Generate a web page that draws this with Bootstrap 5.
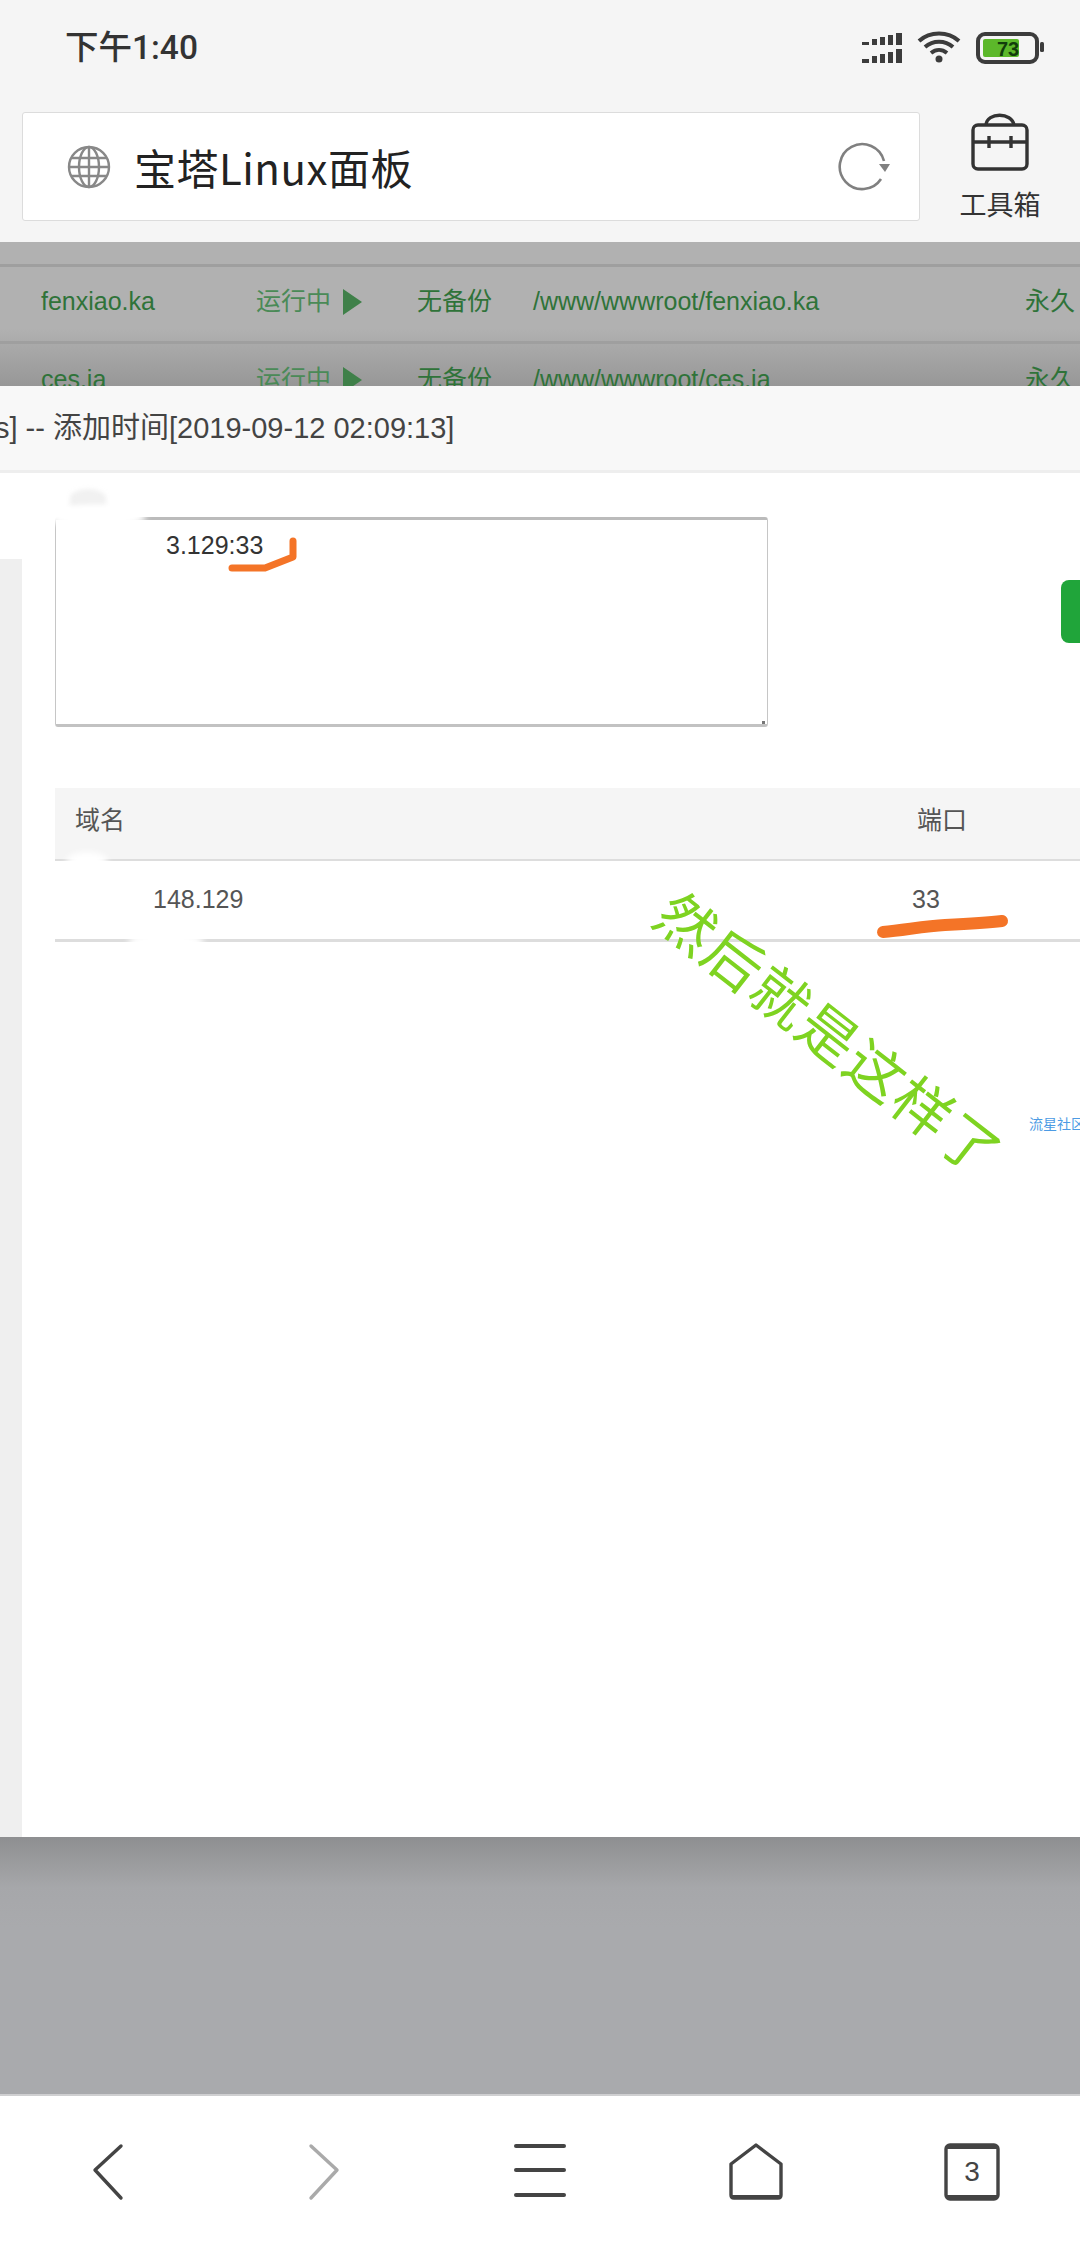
<!DOCTYPE html>
<html lang="zh-CN">
<head>
  <meta charset="UTF-8" />
  <meta name="viewport" content="width=device-width, initial-scale=1.0" />
  <title>宝塔Linux面板</title>
  <link href="https://cdn.jsdelivr.net/npm/bootstrap@5.3.3/dist/css/bootstrap.min.css" rel="stylesheet" />
  <style>
    body {
      width: 1080px;
      height: 2248px;
      overflow: hidden;
      background: #fff;
      font-family: "Liberation Sans", "Noto Sans CJK SC", sans-serif;
    }
    .shell { width: 1080px; height: 2248px; overflow: hidden; position: relative; }

    /* browser chrome */
    .top-chrome { height: 242px; background: #f5f5f5; }
    .status-row { height: 96px; padding: 0 36px 0 65px; }
    .clock { font-family: Roboto, "Noto Sans CJK SC", sans-serif; font-size: 33.500px; font-weight: 500; color: #333; }
    .addr-row { padding: 16px 0 0 22px; }
    .addr-box {
      width: 898px; height: 109px; background: #fff;
      border: 1px solid #dcdcdc; border-radius: 3px;
      padding: 0 28px 0 44px;
    }
    .addr-title { font-family: "Noto Sans CJK SC", sans-serif; font-size: 42px; color: #222; margin-left: 23px; letter-spacing: .5px; }
    .tool-col { width: 160px; margin-top: 0; }
    .tool-label { font-family: "Noto Sans CJK SC", sans-serif; font-size: 27px; line-height: 34px; color: #333; margin-top: 15px; }

    /* dimmed list behind the dialog */
    .dim-list { height: 144px; overflow: hidden; background: linear-gradient(#b1b1b1 60%, #979797 100%); }
    .dim-list table { table-layout: fixed; width: 1080px; margin: 22px 0 0; }
    .dim-list td {
      height: 77px; padding: 0 0 5px; background: transparent; vertical-align: middle;
      border-top: 3px solid #9f9f9f; border-bottom: 0;
      font-size: 25px; color: #2f7339; white-space: nowrap;
    }
    .dim-list td:first-child { padding-left: 41px; }
    .run-cell { color: #4a8a57 !important; }
    .run-arrow { font-size: 0; display: inline-block; margin-left: 12px; border-left: 19px solid #3f8049; border-top: 13px solid transparent; border-bottom: 13px solid transparent; vertical-align: -5px; }

    /* dialog */
    .dlg-head {
      height: 87px; background: #f8f8f8; border-bottom: 3px solid #eee;
      font-size: 29px; line-height: 84px; color: #444; white-space: nowrap; text-indent: -5px;
    }
    .dlg-main { height: 1364px; background: #fff; }
    .side-strip { width: 22px; flex: none; }
    .side-fill { margin-top: 86px; height: 1278px; background: #efefef; }
    .dlg-content { flex: 1; min-width: 0; padding: 44px 0 0 33px; overflow: hidden; }
    .addr-input {
      width: 713px; height: 210px; flex: none; padding: 10px 0 0 110px; resize: none;
      border: 1px solid #c6c6c6; border-top: 3px solid #bbb; border-bottom: 3px solid #c2c2c2;
      border-radius: 3px; font-size: 25px; line-height: 30px; color: #333;
      font-family: "Liberation Sans", sans-serif;
    }
    .add-btn {
      width: 60px; height: 63px; margin: 63px 0 0 293px; flex: none;
      border: 0; border-radius: 8px 0 0 8px; background: #20a53a;
    }
    .domain-table { width: 1025px; margin: 61px 0 0; table-layout: fixed; font-size: 25px; color: #555; }
    .domain-table th, .domain-table td { padding: 0; vertical-align: middle; font-weight: 400; color: #555; }
    .domain-table th { height: 72px; background: #f5f5f5; border-bottom: 2px solid #ddd; padding-bottom: 5px; }
    .domain-table td { height: 80px; background: #fff; border-bottom: 3px solid #ddd; }
    .cell-a { width: 857px; padding-left: 20px !important; }
    .cell-port { padding-left: 5px !important; }
    .domain-table td.cell-port { padding-left: 0 !important; }
    .ip-cell { padding-left: 98px !important; }

    /* overlays drawn on top of the screenshot */
    .ink-layer { position: absolute; left: 0; top: 0; pointer-events: none; }
    .smear { position: absolute; background: #fff; border-radius: 50%; filter: blur(3px); }
    .smear-a { left: 48px; top: 505px; width: 98px; height: 24px; }
    .smear-b { left: 66px; top: 852px; width: 42px; height: 18px; }
    .smear-c { left: 128px; top: 932px; width: 76px; height: 20px; }
    .ghost { position: absolute; left: 70px; top: 489px; width: 36px; height: 18px; background: #f1f1f1; border-radius: 50% 50% 0 0; filter: blur(2px); }
    .grip-dot { position: absolute; left: 762px; top: 721px; width: 3px; height: 3px; background: #777; }
    .hand-note {
      position: absolute; left: 621px; top: 992px; width: 420px; text-align: center;
      font-family: "Noto Sans CJK SC", sans-serif; font-size: 58px; line-height: 80px; font-weight: 400; letter-spacing: 2px;
      color: #7ed321; white-space: nowrap; transform: rotate(38deg);
    }
    .wm-note { position: absolute; left: 1029px; top: 1114px; font-family: "Noto Sans CJK SC", sans-serif; font-size: 14px; line-height: 18px; color: #4c9be4; white-space: nowrap; }

    /* backdrop + bottom bar */
    .backdrop { height: 257px; background: linear-gradient(#8e8f91 0, #a6a7aa 50px, #a9aaad 90px); }
    .bottom-bar { height: 154px; background: #fff; border-top: 2px solid #cfcfd1; padding-top: 47px; }
    .tab-count { position: relative; width: 56px; height: 58px; }
    .tab-num { position: absolute; left: 0; right: 0; top: 11px; text-align: center; font-family: "Liberation Sans", sans-serif; font-size: 28px; line-height: 36px; color: #444; }
  </style>
</head>
<body>
  <div class="shell">
    <!-- status bar + address bar -->
    <div class="top-chrome">
      <div class="status-row d-flex align-items-center justify-content-between">
        <span class="clock">下午1:40</span>
        <svg width="182" height="40" viewBox="862 28 182 40" fill="none">
          <g fill="#3c3c3c">
            <rect x="862" y="42" width="7" height="3"/><rect x="872" y="39" width="5" height="6"/><rect x="880" y="37" width="5" height="8"/><rect x="888" y="35" width="5" height="10"/><rect x="896" y="33" width="6" height="12"/>
            <rect x="862" y="59" width="7" height="4"/><rect x="872" y="56" width="5" height="7"/><rect x="880" y="54" width="5" height="9"/><rect x="888" y="52" width="5" height="11"/><rect x="896" y="49" width="6" height="14"/>
          </g>
          <g stroke="#3c3c3c" stroke-width="4">
            <path d="M919 41c11-10 29-10 40 0"/>
            <path d="M925 47c8-7 20-7 28 0"/>
            <path d="M931 53c5-4 11-4 16 0"/>
          </g>
          <circle cx="939" cy="59" r="3.5" fill="#3c3c3c"/>
          <rect x="978" y="34" width="59" height="28" rx="7" stroke="#3c3c3c" stroke-width="4"/>
          <rect x="983" y="39" width="36" height="18" rx="2" fill="#5cb82a"/>
          <rect x="1040" y="42" width="4" height="10" rx="1.5" fill="#3c3c3c"/>
          <text x="1008" y="56" text-anchor="middle" font-family="Liberation Sans" font-size="20" font-weight="700" fill="#123d0c">73</text>
        </svg>
      </div>
      <div class="addr-row d-flex align-items-start">
        <div class="addr-box d-flex align-items-center">
          <svg width="44" height="44" viewBox="0 0 44 44" fill="none" stroke="#888" stroke-width="2.4">
            <circle cx="22" cy="22" r="20"/>
            <ellipse cx="22" cy="22" rx="10" ry="20"/>
            <path d="M22 2v40M4 13h36M2 22h40M4 31h36"/>
          </svg>
          <span class="addr-title">宝塔Linux面板</span>
          <svg class="ms-auto" width="54" height="52" viewBox="0 0 54 52" fill="none">
            <path d="M44 38A22.500 22.500 0 1 1 47 20" stroke="#808080" stroke-width="2.600"/>
            <path d="M42 23h11l-5 8z" fill="#808080"/>
          </svg>
        </div>
        <div class="tool-col d-flex flex-column align-items-center">
          <svg width="60" height="60" viewBox="0 0 60 60" fill="none" stroke="#333" stroke-width="3.400">
            <rect x="3" y="13" width="54" height="44" rx="5"/>
            <path d="M16 13c1-13 26-13 28 0M3 30h54M19 24v12M41 24v12"/>
          </svg>
          <span class="tool-label">工具箱</span>
        </div>
      </div>
    </div>

    <!-- list behind the dialog -->
    <div class="dim-list">
      <table class="table">
        <colgroup><col style="width:256px"><col style="width:161px"><col style="width:116px"><col style="width:492px"><col></colgroup>
        <tr>
          <td>fenxiao.ka</td>
          <td class="run-cell">运行中<span class="run-arrow"></span></td>
          <td>无备份</td>
          <td>/www/wwwroot/fenxiao.ka</td>
          <td>永久</td>
        </tr>
        <tr>
          <td>ces.ia</td>
          <td class="run-cell">运行中<span class="run-arrow"></span></td>
          <td>无备份</td>
          <td>/www/wwwroot/ces.ia</td>
          <td>永久</td>
        </tr>
      </table>
    </div>

    <!-- dialog -->
    <div class="dlg-head">s] -- 添加时间[2019-09-12 02:09:13]</div>
    <div class="dlg-main d-flex">
      <div class="side-strip"><div class="side-fill"></div></div>
      <div class="dlg-content">
        <div class="d-flex">
          <textarea class="addr-input form-control" readonly>3.129:33</textarea>
          <button class="add-btn btn btn-success" type="button" aria-label="添加"></button>
        </div>
        <table class="domain-table table">
          <thead>
            <tr><th class="cell-a">域名</th><th class="cell-port">端口</th></tr>
          </thead>
          <tbody>
            <tr><td class="ip-cell">148.129</td><td class="cell-port">33</td></tr>
          </tbody>
        </table>
      </div>
    </div>

    <div class="backdrop"></div>

    <!-- bottom bar -->
    <div class="bottom-bar d-flex justify-content-around align-items-start">
      <svg width="56" height="58" viewBox="0 0 56 58" fill="none" stroke="#444" stroke-width="3.400" stroke-linecap="round" stroke-linejoin="round"><path d="M41 3 L15 27 L41 55"/></svg>
      <svg width="56" height="58" viewBox="0 0 56 58" fill="none" stroke="#aaa" stroke-width="3.400" stroke-linecap="round" stroke-linejoin="round"><path d="M15 3 L41 27 L15 55"/></svg>
      <svg width="56" height="58" viewBox="0 0 56 58" fill="#444"><rect x="2" y="1" width="52" height="4" rx="2"/><rect x="2" y="25" width="52" height="4" rx="2"/><rect x="2" y="50" width="52" height="4" rx="2"/></svg>
      <svg width="56" height="58" viewBox="0 0 56 58" fill="none" stroke="#444" stroke-width="3.400" stroke-linejoin="round"><path d="M28 2 L53 21 V52 Q53 55 50 55 H6 Q3 55 3 52 V21 Z"/><path d="M3 54h50" stroke-width="4"/></svg>
      <div class="tab-count">
        <svg width="56" height="58" viewBox="0 0 56 58" fill="none" stroke="#444" stroke-width="3.400"><rect x="2" y="2" width="52" height="54" rx="4"/><path d="M3 4h50M3 54h50" stroke-width="4"/></svg>
        <span class="tab-num">3</span>
      </div>
    </div>

    <!-- smudges, marker strokes and the handwritten note -->
    <div class="ghost"></div>
    <div class="smear smear-a"></div>
    <div class="smear smear-b"></div>
    <div class="smear smear-c"></div>
    <div class="grip-dot"></div>
    <svg class="ink-layer" width="1080" height="2248" fill="none" stroke="#f47427" stroke-linecap="round" stroke-linejoin="round">
      <path d="M232 568H265L293 557V541" stroke-width="7"/>
      <path d="M883 932C905 930 925 926 945 925C965 924 985 923 1002 921" stroke-width="12"/>
    </svg>
    <div class="hand-note">然后就是这样了</div>
    <div class="wm-note">流星社区</div>
  </div>

  <script src="https://cdn.jsdelivr.net/npm/bootstrap@5.3.3/dist/js/bootstrap.bundle.min.js"></script>
</body>
</html>
